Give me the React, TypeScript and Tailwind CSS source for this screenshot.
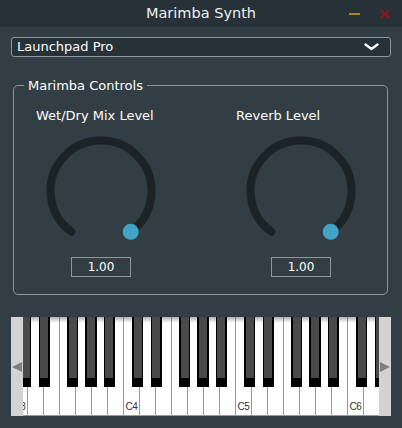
import React from "react";

const FONT = { fontFamily: '"DejaVu Sans", "Liberation Sans", sans-serif' };

const WHITE_W = 16;
const BLACK_W = 11.2;
// black key offsets inside one octave (C#, D#, F#, G#, A#)
const blackOffsets = [9.28, 27.52, 56.16, 74.4, 92.64];
const octaves = [3, 4, 5, 6];
const whiteNames = ["C", "D", "E", "F", "G", "A", "B"];

function Knob() {
  // rotary from 216deg to 504deg (clockwise from top), value at max
  const cx = 60;
  const cy = 60;
  const r = 50.5;
  const pt = (deg: number) => {
    const a = (deg * Math.PI) / 180;
    return [cx + r * Math.sin(a), cy - r * Math.cos(a)];
  };
  const [sx, sy] = pt(216);
  const [ex, ey] = pt(144);
  return (
    <svg width="120" height="120" viewBox="0 0 120 120" className="block">
      <path
        d={`M ${sx} ${sy} A ${r} ${r} 0 1 1 ${ex} ${ey}`}
        fill="none"
        stroke="#1b2327"
        strokeWidth="8"
        strokeLinecap="round"
      />
      <circle cx={ex} cy={ey} r="8" fill="#42a2c8" />
    </svg>
  );
}

function KnobColumn({ label, className }: { label: string; className: string }) {
  return (
    <div className={`flex flex-col ${className}`}>
      <div className="mt-[15px] pl-[22px] text-[13px] leading-[15px] text-white">{label}</div>
      <div className="ml-[26.5px] mt-[8px]">
        <Knob />
      </div>
      <div className="ml-[57px] mt-[6px] h-[20px] w-[60px] border border-[#8e989b] text-center text-[12px] leading-[18px] text-white">
        1.00
      </div>
    </div>
  );
}

function Keyboard() {
  return (
    <div className="mx-[11px] mt-[22px] flex h-[99px]">
      {/* scroll left */}
      <div className="flex w-[12px] shrink-0 items-center justify-center bg-[#d3d3d3]">
        <svg width="10" height="10" viewBox="0 0 10 10">
          <polygon points="0,5 10,0 10,10" fill="#7f7f7f" />
        </svg>
      </div>

      <div className="relative flex-1 overflow-hidden border-b border-[#999]">
        <div className="-ml-[12px] flex h-full">
          {octaves.map((o) =>
            whiteNames.map((n) => (
              <div
                key={`${n}${o}`}
                className="relative flex h-full w-[16px] shrink-0 items-end justify-center border-l border-[#999] bg-white pb-[2px]"
              >
                {n === "C" && (
                  <span
                    className="text-[10px] leading-[12px] tracking-[-0.5px] text-[#333]"
                    style={{ fontFamily: '"Liberation Sans", sans-serif' }}
                  >
                    C{o}
                  </span>
                )}
              </div>
            ))
          )}
        </div>

        {/* top shadow */}
        <div className="absolute inset-x-0 top-0 h-[6px] bg-gradient-to-b from-black/30 to-transparent" />

        {octaves.map((o, oi) =>
          blackOffsets.map((off, bi) => (
            <div
              key={`b${o}-${bi}`}
              className="absolute top-0 h-[70px] bg-black"
              style={{ left: -12 + oi * 7 * WHITE_W + off, width: BLACK_W }}
            >
              <div className="mx-[1.4px] h-[61px] bg-[#494949]" />
            </div>
          ))
        )}
      </div>

      {/* scroll right */}
      <div className="flex w-[12px] shrink-0 items-center justify-center bg-[#d3d3d3]">
        <svg width="10" height="10" viewBox="0 0 10 10">
          <polygon points="10,5 0,0 0,10" fill="#7f7f7f" />
        </svg>
      </div>
    </div>
  );
}

export default function App() {
  return (
    <div className="h-[428px] w-[402px] overflow-hidden bg-[#323e44]" style={FONT}>
      {/* Title bar */}
      <div className="relative flex h-[27px] items-center justify-center bg-[#263238]">
        <span className="text-[14.5px] text-[#f0f0f0]">Marimba Synth</span>
        <div className="absolute right-[12px] top-0 flex h-full items-center gap-[20px]">
          <div className="h-[2px] w-[11px] bg-[#aa8811]" />
          <svg width="10" height="10" viewBox="0 0 10 10">
            <path d="M1 1 L9 9 M9 1 L1 9" stroke="#9a131d" strokeWidth="2" />
          </svg>
        </div>
      </div>

      {/* Device dropdown */}
      <div className="mx-[11px] mt-[10px] flex h-[20px] items-center justify-between rounded-[3px] border border-[#8e989b] bg-[#263238] pl-[5px] pr-[11px]">
        <span className="text-[13px] leading-[16px] text-white">Launchpad Pro</span>
        <svg width="15" height="8" viewBox="0 0 15 8">
          <path d="M1.5 1.5 L7.5 6 L13.5 1.5" fill="none" stroke="white" strokeWidth="2.2" strokeLinecap="round" strokeLinejoin="round" />
        </svg>
      </div>

      {/* Marimba controls group */}
      <fieldset className="ml-[13px] mt-[21px] h-[217px] w-[375px] min-w-0 rounded-[5px] border border-[#8e989b] p-0">
        <legend className="ml-[10px] px-[4px] text-[13px] leading-[15px] text-white">Marimba Controls</legend>
        <div className="flex">
          <KnobColumn label="Wet/Dry Mix Level" className="w-[200px] shrink-0" />
          <KnobColumn label="Reverb Level" className="flex-1" />
        </div>
      </fieldset>

      <Keyboard />
    </div>
  );
}
